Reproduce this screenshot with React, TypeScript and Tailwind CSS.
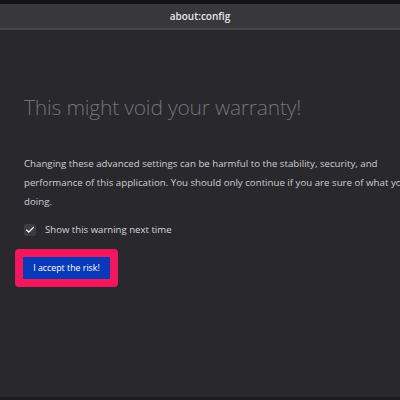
import { Check } from 'lucide-react';

export default function App() {
  return (
    <div
      className="w-[400px] h-[400px] overflow-hidden flex flex-col bg-[#29282d]"
      style={{ fontFamily: '"Open Sans", "Noto Sans", sans-serif' }}
    >
      {/* Window title */}
      <div className="h-[4px] bg-[#141416]" />
      <div className="h-[26px] flex items-center justify-center bg-[#38373c] border-b-2 border-[#46454b]">
        <span className="text-[10px] font-semibold text-[#e6e6e8]">about:config</span>
      </div>

      {/* Warning */}
      <div className="flex-1 pl-[24px] pt-[67px]">
        <h1 className="text-[21px] font-light text-[#737277] leading-none tracking-[-0.2px] whitespace-nowrap">
          This might void your warranty!
        </h1>
        <p className="mt-[36px] w-[440px] text-[9.7px] leading-[19px] text-[#cfcfd2]">
          Changing these advanced settings can be harmful to the stability, security, and
          <br />
          performance of this application. You should only continue if you are sure of what you are
          <br />
          doing.
        </p>

        <label className="mt-[12px] flex items-center gap-[9px]">
          <span className="w-[12px] h-[12px] rounded-[2px] bg-[#3d3c42] flex items-center justify-center">
            <Check className="w-[10px] h-[10px] text-white" strokeWidth={3} />
          </span>
          <span className="text-[9.6px] text-[#d6d6d8]">Show this warning next time</span>
        </label>

        <div className="mt-[12px] -ml-[9px] inline-flex p-[8px] bg-[#f2175c] rounded-[4px]">
          <button className="w-[87px] h-[22px] bg-[#0739b8] text-white text-[8.8px] flex items-center justify-center">
            I accept the risk!
          </button>
        </div>
      </div>
      <div className="h-[3px] bg-[#1c1c1f]" />
    </div>
  );
}
